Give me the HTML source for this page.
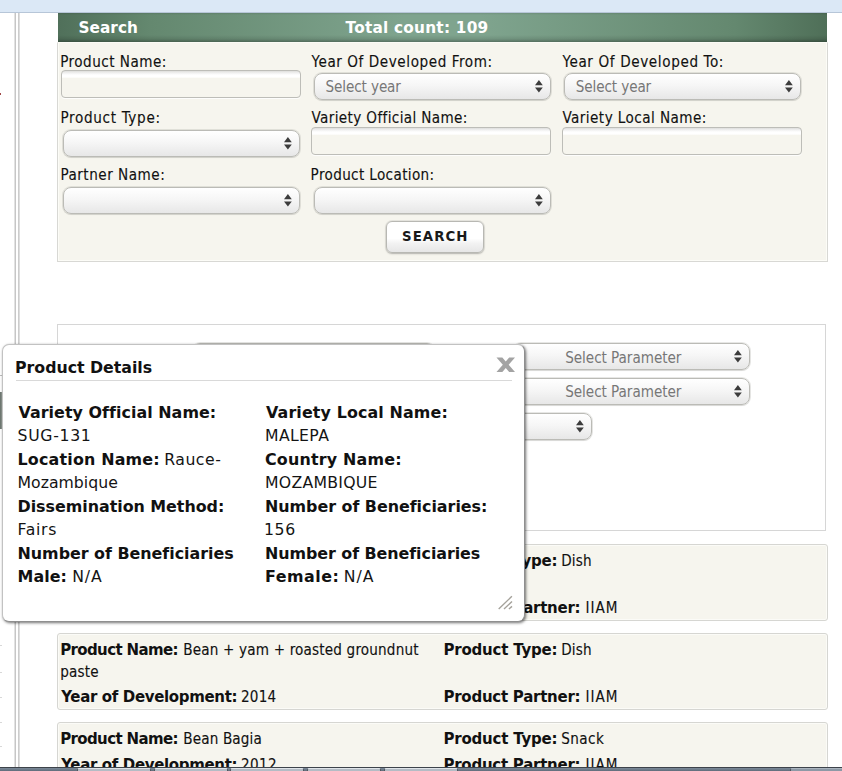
<!DOCTYPE html>
<html><head><meta charset="utf-8"><title>Product Search</title>
<style>
*{box-sizing:border-box;margin:0;padding:0}
html,body{width:842px;height:771px;overflow:hidden;background:#fff}
body{position:relative;font-family:"DejaVu Sans Condensed","Liberation Sans",sans-serif;font-size:16px;color:#111}
.abs{position:absolute}
.t{position:absolute;white-space:nowrap;line-height:20px}
.H{font-family:"DejaVu Sans","Liberation Sans",sans-serif;font-weight:bold;font-size:15.3px;color:#fff}
.L{font-family:"DejaVu Sans Condensed","Liberation Sans",sans-serif;font-weight:normal;font-size:15.1px;color:#111}
.S{font-family:"DejaVu Sans Condensed","Liberation Sans",sans-serif;font-weight:normal;font-size:15.1px;color:#777}
.B{font-family:"DejaVu Sans Condensed","Liberation Sans",sans-serif;font-weight:bold;font-size:14.8px;color:#1a1a1a}
.CB{font-family:"DejaVu Sans","Liberation Sans",sans-serif;font-weight:bold;font-size:15px;color:#111}
.CR{font-family:"DejaVu Sans Condensed","Liberation Sans",sans-serif;font-weight:normal;font-size:15.1px;color:#111}
.DT{font-family:"DejaVu Sans","Liberation Sans",sans-serif;font-weight:bold;font-size:15.8px;color:#111}
.DB{font-family:"DejaVu Sans","Liberation Sans",sans-serif;font-weight:bold;font-size:15.9px;color:#111}
.DR{font-family:"DejaVu Sans","Liberation Sans",sans-serif;font-weight:normal;font-size:15.7px;color:#141414}
.L,.CR{-webkit-text-stroke:0.12px #111}
#topstrip{left:0;top:0;width:842px;height:13px;background:#dbe8f6;border-bottom:1px solid #b7c6d8}
.vline{top:13px;width:2px;height:760px}
#search{left:57px;top:13px;width:771px;height:249px}
#hdr{left:1px;top:0;width:769px;height:29px;background:linear-gradient(90deg,#50705a 0%,#64886f 12%,#7fa48e 45%,#7fa48e 55%,#64886f 88%,#4f6f58 100%)}
#hdr:after{content:"";position:absolute;left:0;top:0;right:0;bottom:0;background:linear-gradient(180deg,rgba(0,0,0,.10) 0,rgba(0,0,0,0) 2px,rgba(0,0,0,0) 22px,rgba(0,0,0,.10) 26px,rgba(0,0,0,.30) 29px)}
#sbody{left:0;top:29px;width:771px;height:220px;background:#f6f5ee;border:1px solid #d8d8d4;border-top:1px solid #fbfbf6;box-shadow:inset -1px -1px 0 #fcfcf7,inset 1px 0 0 #fcfcf7}
.inp{position:absolute;height:28px;width:240px;border:1px solid #bdbdb8;border-radius:4px;background:linear-gradient(180deg,#dededc 0px,#f1f1f1 2px,#ffffff 4px,#ffffff 6px,#f6f5ee 7.5px,#f6f5ee 100%);box-shadow:0 1px 0 rgba(255,255,255,.8)}
.sel{position:absolute;height:27px;border:1px solid #bbbbb6;border-radius:8px;background:linear-gradient(180deg,#ffffff 0%,#f6f6f6 45%,#e7e7e7 100%);box-shadow:0 0 0 1px rgba(170,170,160,.28),0 1px 1px rgba(0,0,0,.08)}
.sel svg{position:absolute;right:7.3px;top:6.2px}
#btn{left:329px;top:208px;width:98px;height:32px;border:1px solid #b8b8b3;border-radius:6px;background:linear-gradient(180deg,#ffffff 0%,#ffffff 55%,#f3f3f3 70%,#e6e6e6 100%);box-shadow:0 0 0 1px rgba(0,0,0,.06),0 1px 2px rgba(0,0,0,.22)}
#p2{left:57px;top:324px;width:769px;height:207px;border:1px solid #d6d6d6;background:#fff}
.card{left:57px;width:771px;height:77px;background:#f6f5ee;border:1px solid #d6d6d2;border-radius:3px;box-shadow:inset 0 0 0 1px rgba(255,255,255,.55)}
#dlg{left:2px;top:344px;width:523px;height:278px;background:#fff;border:1px solid #c2c2c2;border-right-color:#8f8f8f;border-bottom-color:#8f8f8f;border-radius:7px;box-shadow:1px 1px 3px rgba(0,0,0,.55)}
#dlg .hr{position:absolute;left:13px;top:35px;width:496px;height:1px;background:#d9d9d9}
#task{left:0;top:767px;width:842px;height:4px;background:linear-gradient(180deg,#3d434a 0,#3d434a 1px,#7b8998 1px,#606d7b 100%)}
#task i{position:absolute;top:1px;height:3px;width:74px;background:#b4bcc5;border-top:1px solid #dfe4e9;border-left:1px solid #50565e;border-right:1px solid #50565e;border-radius:2px 2px 0 0}
</style></head><body>
<div id="topstrip" class="abs"></div>
<div class="abs vline" style="left:14px;background:linear-gradient(90deg,#e2e2e2 50%,#c6c6c6 50%)"></div>
<div class="abs vline" style="left:18px;background:linear-gradient(90deg,#cccccc 50%,#dedede 50%)"></div>
<div class="abs" style="left:0;top:93px;width:1px;height:2px;background:#a04848"></div>

<div class="abs" style="left:0;top:645px;width:2px;height:1px;background:#d8d8d8"></div><div class="abs" style="left:0;top:672px;width:2px;height:1px;background:#d8d8d8"></div><div class="abs" style="left:0;top:697px;width:2px;height:1px;background:#d8d8d8"></div><div class="abs" style="left:0;top:722px;width:2px;height:1px;background:#d8d8d8"></div><div class="abs" style="left:0;top:746px;width:2px;height:1px;background:#d8d8d8"></div>
<div class="abs" style="left:0;top:392px;width:2px;height:37px;background:linear-gradient(90deg,#636d66,#9aa19c)"></div><div class="abs" style="left:0;top:375px;width:3px;height:1px;background:#bdbdbd"></div>
<div id="search" class="abs">
 <div id="hdr" class="abs"></div>
 <div id="sbody" class="abs"></div>
<div class="t H" style="left:21.40px;top:4.50px;letter-spacing:0.08px">Search</div>
<div class="t H" style="left:288.50px;top:4.50px;letter-spacing:0.24px">Total count: 109</div>
 <div class="inp" style="left:4px;top:57px"></div>
 <div class="sel" style="left:257px;top:60px;width:237px"><svg width="7.8" height="12.6" viewBox="0 0 8 12" preserveAspectRatio="none"><path d="M4 0L8 4.9H0zM4 12L0 7.1H8z" fill="#3c3c3c"/></svg></div>
 <div class="sel" style="left:507px;top:60px;width:237px"><svg width="7.8" height="12.6" viewBox="0 0 8 12" preserveAspectRatio="none"><path d="M4 0L8 4.9H0zM4 12L0 7.1H8z" fill="#3c3c3c"/></svg></div>
 <div class="sel" style="left:6px;top:117px;width:237px"><svg width="7.8" height="12.6" viewBox="0 0 8 12" preserveAspectRatio="none"><path d="M4 0L8 4.9H0zM4 12L0 7.1H8z" fill="#3c3c3c"/></svg></div>
 <div class="inp" style="left:254px;top:114px"></div>
 <div class="inp" style="left:505px;top:114px"></div>
 <div class="sel" style="left:6px;top:174px;width:237px"><svg width="7.8" height="12.6" viewBox="0 0 8 12" preserveAspectRatio="none"><path d="M4 0L8 4.9H0zM4 12L0 7.1H8z" fill="#3c3c3c"/></svg></div>
 <div class="sel" style="left:257px;top:174px;width:237px"><svg width="7.8" height="12.6" viewBox="0 0 8 12" preserveAspectRatio="none"><path d="M4 0L8 4.9H0zM4 12L0 7.1H8z" fill="#3c3c3c"/></svg></div>
 <div id="btn" class="abs"></div>
<div class="t L" style="left:3.20px;top:38.50px;letter-spacing:0.483px">Product Name:</div>
<div class="t L" style="left:254.60px;top:38.50px;letter-spacing:0.573px">Year Of Developed From:</div>
<div class="t L" style="left:505.50px;top:38.50px;letter-spacing:0.625px">Year Of Developed To:</div>
<div class="t L" style="left:3.40px;top:95.20px;letter-spacing:0.692px">Product Type:</div>
<div class="t L" style="left:254.60px;top:95.20px;letter-spacing:0.367px">Variety Official Name:</div>
<div class="t L" style="left:505.50px;top:95.20px;letter-spacing:0.444px">Variety Local Name:</div>
<div class="t L" style="left:3.40px;top:152.30px;letter-spacing:0.517px">Partner Name:</div>
<div class="t L" style="left:253.60px;top:152.30px;letter-spacing:0.362px">Product Location:</div>
<div class="t S" style="left:268.60px;top:63.60px;letter-spacing:-0.12px">Select year</div>
<div class="t S" style="left:518.80px;top:63.60px;letter-spacing:-0.11px">Select year</div>
<div class="t B" style="left:345.10px;top:212.80px;letter-spacing:1.04px">SEARCH</div>
</div>

<div id="p2" class="abs">
 <div class="sel" style="left:134px;top:18px;width:243px"></div>
 <div class="sel" style="left:455px;top:18px;width:237px"><svg width="7.8" height="12.6" viewBox="0 0 8 12" preserveAspectRatio="none"><path d="M4 0L8 4.9H0zM4 12L0 7.1H8z" fill="#3c3c3c"/></svg></div>
 <div class="sel" style="left:455px;top:53px;width:237px"><svg width="7.8" height="12.6" viewBox="0 0 8 12" preserveAspectRatio="none"><path d="M4 0L8 4.9H0zM4 12L0 7.1H8z" fill="#3c3c3c"/></svg></div>
 <div class="sel" style="left:297px;top:88px;width:237px"><svg width="7.8" height="12.6" viewBox="0 0 8 12" preserveAspectRatio="none"><path d="M4 0L8 4.9H0zM4 12L0 7.1H8z" fill="#3c3c3c"/></svg></div>
<div class="t S" style="left:507.20px;top:22.80px;letter-spacing:-0.04px">Select Parameter</div>
<div class="t S" style="left:507.20px;top:57.30px;letter-spacing:-0.04px">Select Parameter</div>
</div>

<div class="abs card" style="top:544px">
<div class="t CB" style="left:385.50px;top:5.70px;letter-spacing:-0.208px">Product Type:</div>
<div class="t CR" style="left:503.20px;top:5.70px;letter-spacing:0.2px">Dish</div>
<div class="t CB" style="left:385.50px;top:53.00px;letter-spacing:-0.26px">Product Partner:</div>
<div class="t CR" style="left:527.60px;top:53.00px;letter-spacing:0.967px">IIAM</div>
</div>
<div class="abs card" style="top:633px">
<div class="t CB" style="left:2.20px;top:6.40px;letter-spacing:-0.625px">Product Name:</div>
<div class="t CR" style="left:125.30px;top:6.40px;letter-spacing:0.169px">Bean + yam + roasted groundnut</div>
<div class="t CR" style="left:2.20px;top:28.00px;letter-spacing:0.15px">paste</div>
<div class="t CB" style="left:3.20px;top:52.80px;letter-spacing:-0.347px">Year of Development:</div>
<div class="t CR" style="left:183.00px;top:52.80px;letter-spacing:0.233px">2014</div>
<div class="t CB" style="left:385.50px;top:6.40px;letter-spacing:-0.208px">Product Type:</div>
<div class="t CR" style="left:503.20px;top:6.40px;letter-spacing:0.2px">Dish</div>
<div class="t CB" style="left:385.50px;top:53.00px;letter-spacing:-0.26px">Product Partner:</div>
<div class="t CR" style="left:527.60px;top:53.00px;letter-spacing:0.967px">IIAM</div>
</div>
<div class="abs card" style="top:722px;height:60px">
<div class="t CB" style="left:2.20px;top:6.20px;letter-spacing:-0.625px">Product Name:</div>
<div class="t CR" style="left:125.30px;top:6.20px;letter-spacing:0.133px">Bean Bagia</div>
<div class="t CB" style="left:3.20px;top:31.60px;letter-spacing:-0.347px">Year of Development:</div>
<div class="t CR" style="left:183.00px;top:31.60px;letter-spacing:0.4px">2012</div>
<div class="t CB" style="left:385.50px;top:6.20px;letter-spacing:-0.208px">Product Type:</div>
<div class="t CR" style="left:503.20px;top:6.20px;letter-spacing:0.45px">Snack</div>
<div class="t CB" style="left:385.50px;top:31.60px;letter-spacing:-0.26px">Product Partner:</div>
<div class="t CR" style="left:527.60px;top:31.60px;letter-spacing:0.967px">IIAM</div>
</div>

<div id="dlg" class="abs">
 <svg class="abs" style="left:492.5px;top:11.5px" width="19.5" height="15.5" preserveAspectRatio="none" viewBox="0 0 20 16"><path d="M0.5 0.5H6.5L10 4.6L13.5 0.5H19.5L13 8L19.5 15.5H13.5L10 11.4L6.5 15.5H0.5L7 8z" fill="#a3a3a3"/></svg>
 <div class="hr"></div>
<div class="t DT" style="left:12.00px;top:12.70px;letter-spacing:-0.021px">Product Details</div>
<div class="t DB" style="left:15.50px;top:58.20px;letter-spacing:0.043px">Variety Official Name:</div>
<div class="t DR" style="left:14.50px;top:81.30px;letter-spacing:0.683px">SUG-131</div>
<div class="t DB" style="left:14.50px;top:104.80px;letter-spacing:0.192px">Location Name:</div>
<div class="t DR" style="left:161.20px;top:104.80px;letter-spacing:0.52px">Rauce-</div>
<div class="t DR" style="left:14.50px;top:127.80px;letter-spacing:0.022px">Mozambique</div>
<div class="t DB" style="left:14.50px;top:152.20px;letter-spacing:-0.025px">Dissemination Method:</div>
<div class="t DR" style="left:14.50px;top:175.30px;letter-spacing:0.675px">Fairs</div>
<div class="t DB" style="left:14.50px;top:198.80px;letter-spacing:-0.014px">Number of Beneficiaries</div>
<div class="t DB" style="left:14.50px;top:222.00px;letter-spacing:0.075px">Male:</div>
<div class="t DR" style="left:69.20px;top:222.00px;letter-spacing:0.9px">N/A</div>
<div class="t DB" style="left:263.00px;top:58.20px;letter-spacing:0.122px">Variety Local Name:</div>
<div class="t DR" style="left:262.00px;top:81.30px;letter-spacing:0.36px">MALEPA</div>
<div class="t DB" style="left:262.00px;top:104.80px;letter-spacing:0.192px">Country Name:</div>
<div class="t DR" style="left:262.00px;top:127.80px;letter-spacing:0.267px">MOZAMBIQUE</div>
<div class="t DB" style="left:262.00px;top:152.20px;letter-spacing:-0.022px">Number of Beneficiaries:</div>
<div class="t DR" style="left:261.00px;top:175.30px;letter-spacing:0.6px">156</div>
<div class="t DB" style="left:262.00px;top:198.80px;letter-spacing:-0.055px">Number of Beneficiaries</div>
<div class="t DB" style="left:262.00px;top:222.00px;letter-spacing:0.517px">Female:</div>
<div class="t DR" style="left:340.80px;top:222.00px;letter-spacing:0.95px">N/A</div>
 <svg class="abs" style="left:490px;top:246px" width="24" height="24" viewBox="0 0 24 24"><path d="M5.7 17.9L18.9 5.3M11 18L19 10.5M15.9 18L19 15.4" stroke="#a5a29b" stroke-width="1.4" fill="none"/></svg>
</div>
<div id="task" class="abs"><i style="left:77px"></i><i style="left:154px"></i><i style="left:230px"></i><i style="left:307px"></i><i style="left:384px"></i><i style="left:790px;width:60px;background:#8d99a6;border-top-color:#aab4be"></i></div>
</body></html>
